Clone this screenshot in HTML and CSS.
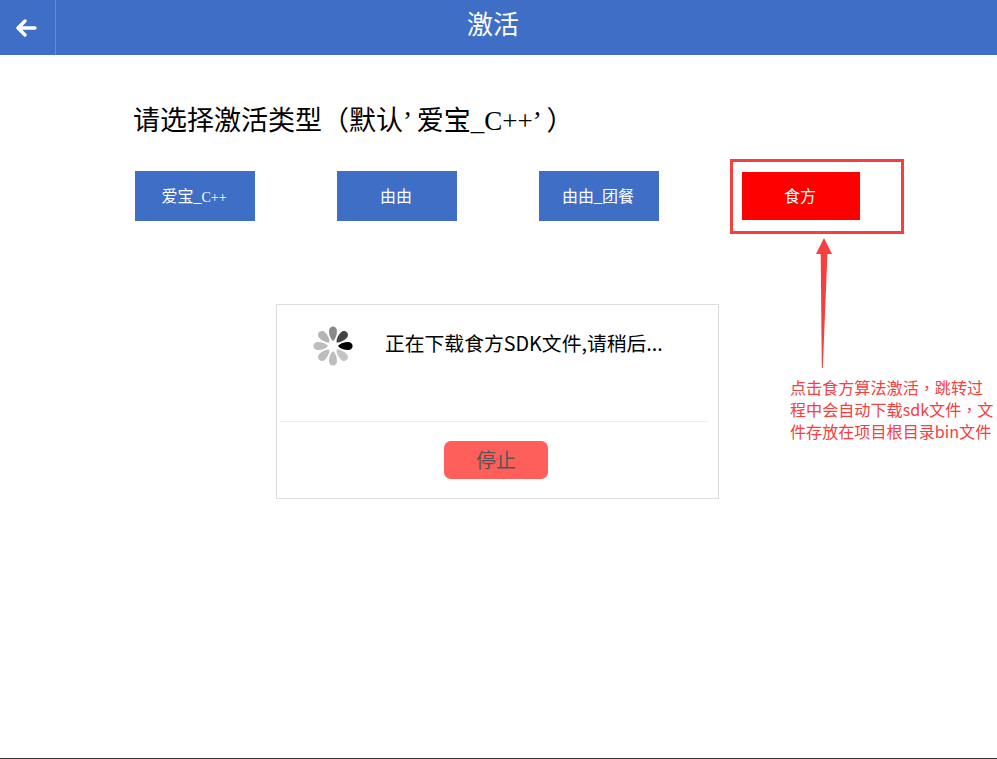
FILE: index.html
```html
<!DOCTYPE html>
<html lang="zh-CN">
<head>
<meta charset="utf-8">
<title>激活</title>
<link rel="stylesheet" href="styles.css">
</head>
<body>
<div class="page">
  <header class="topbar">
    <a class="back">
      <svg width="22" height="18" viewBox="0 0 22 18"><path d="M20 9H3M10 2 3 9l7 7" fill="none" stroke="#fff" stroke-width="3.4" stroke-linecap="round" stroke-linejoin="round"/></svg>
    </a>
    <h1 class="title">激活</h1>
  </header>
  <main class="content">
    <h2 class="prompt">请选择激活类型（默认’ 爱宝_C++’ ）</h2>
    <div class="types">
      <button class="type">爱宝_<span class="narrow">C++</span></button>
      <button class="type">由由</button>
      <button class="type">由由_团餐</button>
      <button class="type type-active">食方</button>
    </div>
    <section class="dialog">
      <div class="dialog-body">
        <svg class="spinner" width="40" height="40" viewBox="-20 -20 40 40">
          <path class="petal p0" d="M5 0C7-2.4 11-4 15-4 18-4 19.6-2 19.6 0 19.6 2 18 4 15 4 11 4 7 2.4 5 0Z"/>
          <path class="petal p1" transform="rotate(45)" d="M5 0C7-2.4 11-4 15-4 18-4 19.6-2 19.6 0 19.6 2 18 4 15 4 11 4 7 2.4 5 0Z"/>
          <path class="petal p2" transform="rotate(90)" d="M5 0C7-2.4 11-4 15-4 18-4 19.6-2 19.6 0 19.6 2 18 4 15 4 11 4 7 2.4 5 0Z"/>
          <path class="petal p3" transform="rotate(135)" d="M5 0C7-2.4 11-4 15-4 18-4 19.6-2 19.6 0 19.6 2 18 4 15 4 11 4 7 2.4 5 0Z"/>
          <path class="petal p4" transform="rotate(180)" d="M5 0C7-2.4 11-4 15-4 18-4 19.6-2 19.6 0 19.6 2 18 4 15 4 11 4 7 2.4 5 0Z"/>
          <path class="petal p5" transform="rotate(225)" d="M5 0C7-2.4 11-4 15-4 18-4 19.6-2 19.6 0 19.6 2 18 4 15 4 11 4 7 2.4 5 0Z"/>
          <path class="petal p6" transform="rotate(270)" d="M5 0C7-2.4 11-4 15-4 18-4 19.6-2 19.6 0 19.6 2 18 4 15 4 11 4 7 2.4 5 0Z"/>
          <path class="petal p7" transform="rotate(315)" d="M5 0C7-2.4 11-4 15-4 18-4 19.6-2 19.6 0 19.6 2 18 4 15 4 11 4 7 2.4 5 0Z"/>
        </svg>
        <p class="dialog-text">正在下载食方SDK文件,请稍后...</p>
      </div>
      <div class="dialog-foot">
        <button class="stop">停止</button>
      </div>
    </section>
  </main>

  <div class="note-box"></div>
  <svg class="note-arrow" width="20" height="134" viewBox="0 0 20 134"><path d="M10 0 18 16H13.4L8.8 130H7.8L6.7 16H2Z" fill="#f6403f"/></svg>
  <p class="note-text" lang="zh-TW">点击食方算法激活，跳转过程中会自动下载sdk文件，文件存放在项目根目录bin文件</p>
</div>
</body>
</html>
```
FILE: styles.css
```css
* { box-sizing: border-box; }
html, body { margin: 0; padding: 0; background: #fff; }
body { font-family: "Noto Sans CJK SC", "Liberation Sans", sans-serif; overflow: hidden; }
.page { position: relative; height: 759px; border-bottom: 1px solid #333; overflow: hidden; }

.topbar { display: flex; align-items: center; height: 55px; background: #3e6ec5; color: #fff; }
.back { display: flex; align-items: center; justify-content: center; flex: none; width: 56px; height: 55px; padding-right: 3px; border-right: 1px solid #658bd1; }
.title { flex: 1; margin: 0 0 3px; padding-right: 67px; text-align: center; font-weight: 400; font-size: 26px; line-height: 52px; font-family: "Liberation Serif", "Noto Sans CJK SC", serif; }

.content { padding: 46px 0 0 133px; }
.prompt { margin: 0; font-weight: 400; font-size: 27px; line-height: 40px; color: #000; white-space: nowrap; font-family: "Liberation Serif", "Noto Sans CJK SC", serif; }

.types { display: flex; align-items: center; gap: 82px; margin: 30px 0 0 2px; }
.type { width: 120px; height: 50px; padding: 0 2px 2px 0; border: 0; background: #3e6ec5; color: #fff; font-size: 16px; font-family: "Liberation Serif", "Noto Sans CJK SC", serif; }
.narrow { font-size: 14px; }
.type-active { width: 118px; height: 48px; margin-left: 1px; background: #f00; }

.dialog { width: 443px; height: 195px; margin: 83px 0 0 143px; padding: 0 10px 0 3px; border: 1px solid #ddd; background: #fff; }
.dialog-body { display: flex; height: 117px; padding: 21px 0 0 33px; border-bottom: 1px solid #eee; }
.spinner { flex: none; margin-right: 33px; filter: blur(0.4px); }
.petal { fill: #bbb; }
.p0 { fill: #000; }
.p1 { fill: #c4c4c4; }
.p2 { fill: #bdbdbd; }
.p3 { fill: #bdbdbd; }
.p4 { fill: #bdbdbd; }
.p5 { fill: #b4b4b4; }
.p6 { fill: #8a8a8a; }
.p7 { fill: #444; }
.dialog-text { margin: 2px 0 0 -1px; font-size: 19.8px; line-height: 30px; color: #000; white-space: nowrap; }
.dialog-foot { display: flex; justify-content: center; padding: 19px 0 0 4px; }
.stop { width: 104px; height: 38px; padding: 0 0 2px; border: 0; border-radius: 7px; background: #ff5f5a; color: #555; font-size: 20px; font-family: inherit; }

.note-box { position: absolute; left: 730px; top: 159px; width: 174px; height: 75px; border: 3px solid #f63f3f; }
.note-arrow { position: absolute; left: 814px; top: 238px; }
.note-text { position: absolute; left: 790px; top: 376px; width: 207px; margin: 0; font-family: "Noto Sans CJK TC", sans-serif; font-size: 16.1px; line-height: 22px; color: #f6403f; }
```
